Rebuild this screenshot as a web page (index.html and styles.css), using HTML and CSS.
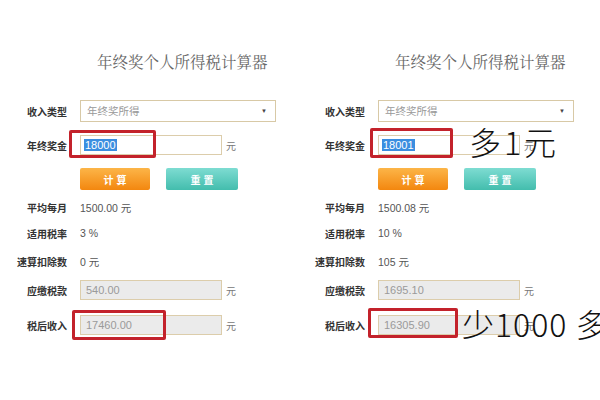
FILE: index.html
```html
<!DOCTYPE html>
<html>
<head>
    <title>年终奖个人所得税计算器</title>
    <link rel="stylesheet" href="styles.css">
</head>
<body>
    <div class="page">
        <!-- left: 18000 -->
        <div class="calc">
            <h1 class="title">年终奖个人所得税计算器</h1>
            <div class="row row-select">
                <span class="label">收入类型</span>
                <div class="select">年终奖所得<span class="arrow">▼</span></div>
            </div>
            <div class="row row-input">
                <span class="label">年终奖金</span>
                <div class="field">
                    <div class="input"><span class="hl">18000</span></div>
                    <span class="mark mark-l1"></span>
                </div>
                <span class="unit">元</span>
            </div>
            <div class="row row-btn">
                <button class="btn btn-calc">计算</button>
                <button class="btn btn-reset">重置</button>
            </div>
            <div class="row row-info"><span class="label">平均每月</span><span class="value">1500.00 元</span></div>
            <div class="row row-info"><span class="label">适用税率</span><span class="value">3 %</span></div>
            <div class="row row-info row-last"><span class="label">速算扣除数</span><span class="value">0 元</span></div>
            <div class="row row-out">
                <span class="label">应缴税款</span>
                <div class="field"><div class="input readonly">540.00</div></div>
                <span class="unit">元</span>
            </div>
            <div class="row row-out row-after">
                <span class="label">税后收入</span>
                <div class="field">
                    <div class="input readonly">17460.00</div>
                    <span class="mark mark-l2"></span>
                </div>
                <span class="unit">元</span>
            </div>
        </div>

        <!-- right: 18001 -->
        <div class="calc">
            <h1 class="title">年终奖个人所得税计算器</h1>
            <div class="row row-select">
                <span class="label">收入类型</span>
                <div class="select">年终奖所得<span class="arrow">▼</span></div>
            </div>
            <div class="row row-input">
                <span class="label">年终奖金</span>
                <div class="field">
                    <div class="input"><span class="hl">18001</span></div>
                    <span class="mark mark-r1"></span>
                    <span class="note note-more">多1元</span>
                </div>
                <span class="unit">元</span>
            </div>
            <div class="row row-btn">
                <button class="btn btn-calc">计算</button>
                <button class="btn btn-reset">重置</button>
            </div>
            <div class="row row-info"><span class="label">平均每月</span><span class="value">1500.08 元</span></div>
            <div class="row row-info"><span class="label">适用税率</span><span class="value">10 %</span></div>
            <div class="row row-info row-last"><span class="label">速算扣除数</span><span class="value">105 元</span></div>
            <div class="row row-out">
                <span class="label">应缴税款</span>
                <div class="field"><div class="input readonly">1695.10</div></div>
                <span class="unit">元</span>
            </div>
            <div class="row row-out row-after">
                <span class="label">税后收入</span>
                <div class="field">
                    <div class="input readonly">16305.90</div>
                    <span class="mark mark-r2"></span>
                    <span class="note note-less">少1000 多</span>
                </div>
                <span class="unit">元</span>
            </div>
        </div>
    </div>
</body>
</html>
```

FILE: styles.css
```css
body {
    margin: 0;
    background-color: #fff;
    font-family: "Liberation Sans", "Noto Sans CJK SC", sans-serif;
    color: #333;
}

.page {
    display: flex;
    width: 600px;
    height: 400px;
    overflow: hidden;
}

.calc {
    width: 298px;
    flex-shrink: 0;
    padding-top: 51px;
    box-sizing: border-box;
}

.title {
    margin: 0;
    padding-left: 97px;
    font-family: "Liberation Serif", "Noto Serif CJK SC", "Noto Sans CJK SC", serif;
    font-size: 15.5px;
    font-weight: normal;
    line-height: 24px;
    color: #666;
    white-space: nowrap;
}

.row {
    display: flex;
    align-items: center;
}

.label {
    width: 67px;
    margin-right: 13px;
    text-align: right;
    font-size: 10px;
    font-weight: bold;
    color: #333;
    white-space: nowrap;
}

.row-select {
    margin-top: 25px;
    height: 22px;
}

.select {
    position: relative;
    width: 196px;
    height: 22px;
    box-sizing: border-box;
    border: 1px solid #d8c9a6;
    padding-left: 6px;
    font-size: 10.5px;
    line-height: 20px;
    color: #999;
}

.arrow {
    position: absolute;
    right: 8px;
    top: 0;
    font-size: 6px;
    color: #444;
}

.row-input {
    margin-top: 13px;
    height: 20px;
}

.field {
    position: relative;
}

.input {
    width: 142px;
    height: 20px;
    box-sizing: border-box;
    border: 1px solid #dccdab;
    padding-left: 3px;
    font-size: 11px;
    line-height: 18px;
    color: #333;
}

.input.readonly {
    background-color: #ebebeb;
    padding-left: 5px;
    color: #9a9a9a;
}

.hl {
    display: inline-block;
    padding: 0 1px;
    line-height: 12px;
    background-color: #3b8ee0;
    color: #fff;
}

.unit {
    margin-left: 4px;
    font-size: 10px;
    color: #777;
}

.row-btn {
    margin-top: 13px;
    height: 22px;
    padding-left: 80px;
    gap: 16px;
}

.btn {
    width: 70px;
    height: 22px;
    border: none;
    border-radius: 2px;
    padding: 0;
    font-family: "Noto Sans CJK SC", sans-serif;
    font-size: 10px;
    font-weight: bold;
    letter-spacing: 3px;
    text-indent: 3px;
    color: #fff;
}

.btn-calc {
    background: linear-gradient(#fcb548, #f3870f);
}

.btn-reset {
    width: 72px;
    background: linear-gradient(#7edcd2, #43bdad);
}

.row-info {
    height: 26px;
}

.row-btn + .row-info {
    margin-top: 4px;
}

.row-last {
    margin-top: 2px;
}

.value {
    font-size: 10.5px;
    color: #555;
}

.row-out {
    margin-top: 6px;
    height: 20px;
}

.row-after {
    margin-top: 15px;
}

.mark {
    position: absolute;
    border: 3px solid #c3222b;
    border-radius: 2px;
    box-sizing: border-box;
}

.mark-l1 {
    left: -11px;
    top: -5px;
    width: 87px;
    height: 28px;
}

.mark-l2 {
    left: -8px;
    top: -5px;
    width: 94px;
    height: 30px;
}

.mark-r1 {
    left: -8px;
    top: -7px;
    width: 83px;
    height: 30px;
}

.mark-r2 {
    left: -10px;
    top: -7px;
    width: 90px;
    height: 30px;
}

.note {
    position: absolute;
    font-family: "Noto Sans CJK SC", sans-serif;
    font-size: 32px;
    font-weight: 300;
    line-height: 32px;
    color: #111;
    white-space: nowrap;
}

.note-more {
    left: 91px;
    top: -10px;
    letter-spacing: 3px;
}

.note-less {
    left: 84px;
    top: -8px;
    letter-spacing: 1px;
}
```
